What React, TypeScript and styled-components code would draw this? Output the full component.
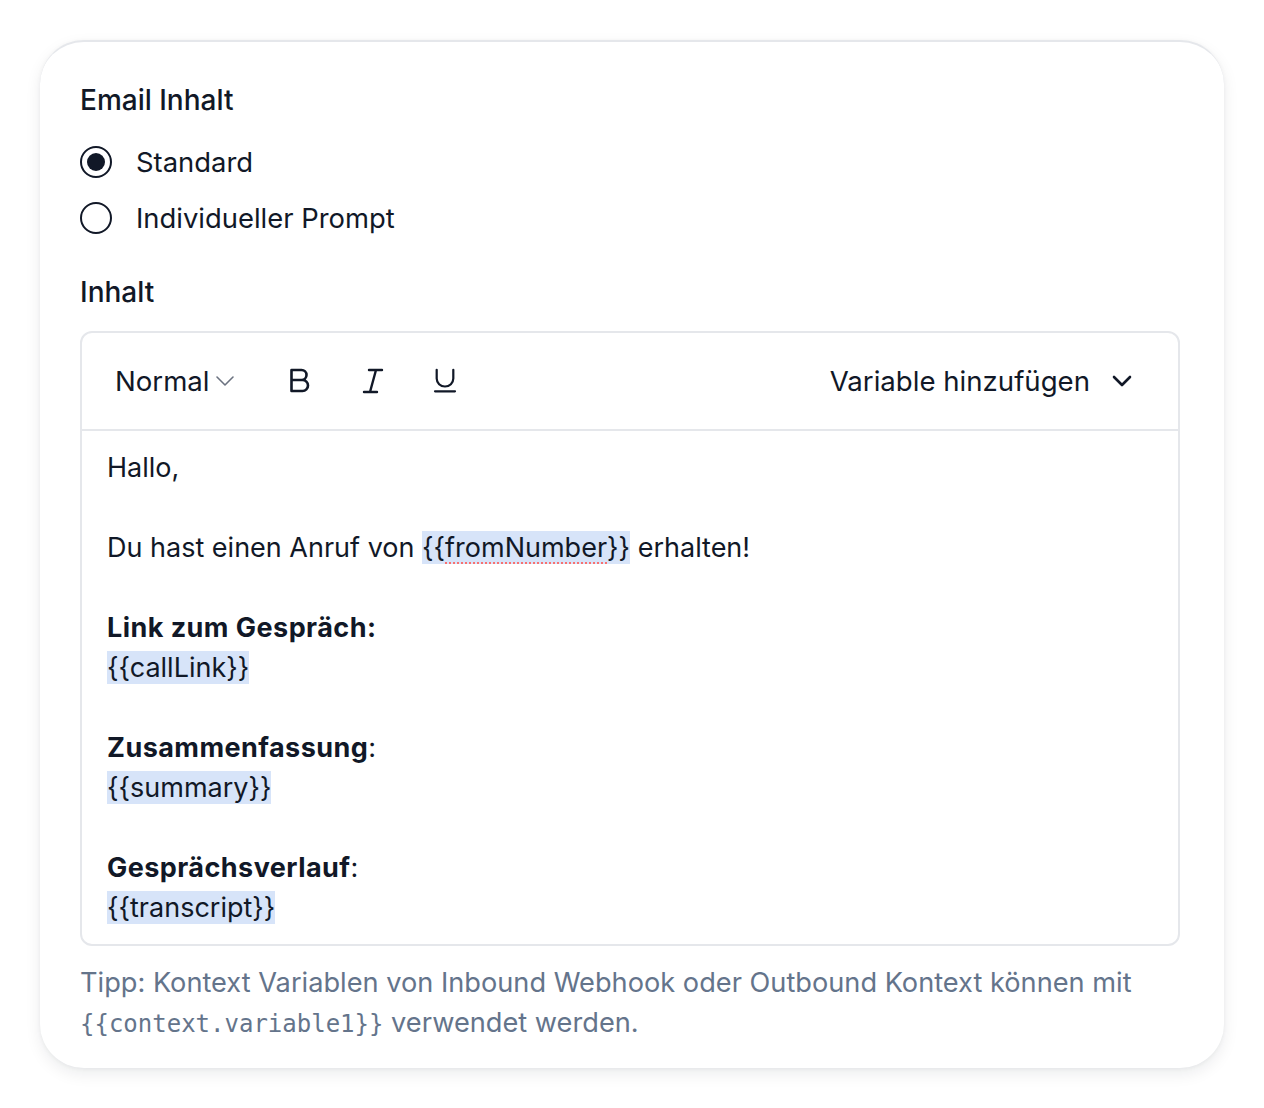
import React from "react";
import styled, { createGlobalStyle } from "styled-components";

const GlobalStyle = createGlobalStyle`
  html, body { margin: 0; padding: 0; background: #ffffff; }
  body { font-family: Inter, "Noto Sans", sans-serif; color: #111827; }
  * { box-sizing: border-box; }
`;

const Page = styled.div`
  padding: 40px;
`;

const Card = styled.section`
  width: 1184px;
  background: #ffffff;
  border-top: 2px solid #e5e7eb;
  border-radius: 44px;
  box-shadow: 0 6px 16px rgba(15, 23, 42, 0.08), 0 1px 4px rgba(15, 23, 42, 0.05);
  padding: 38px 44px 24px 40px;
  display: flex;
  flex-direction: column;
`;

const Label = styled.div`
  font-size: 28px;
  line-height: 40px;
  font-weight: 500;
  color: #111827;
`;

const RadioGroup = styled.div`
  display: flex;
  flex-direction: column;
  gap: 16px;
  margin: 22px 0 34px 0;
`;

const RadioRow = styled.label`
  display: flex;
  align-items: center;
  gap: 24px;
  height: 40px;
  font-size: 27.4px;
  color: #111827;
`;

const RadioCircle = styled.span<{ $checked?: boolean }>`
  width: 32px;
  height: 32px;
  border-radius: 50%;
  border: 2.5px solid #111827;
  display: flex;
  align-items: center;
  justify-content: center;
  flex-shrink: 0;
  &::after {
    content: "";
    display: ${(p) => (p.$checked ? "block" : "none")};
    width: 18px;
    height: 18px;
    border-radius: 50%;
    background: #111827;
  }
`;

const Editor = styled.div`
  margin-top: 19px;
  border: 2px solid #e5e7eb;
  border-radius: 12px;
  display: flex;
  flex-direction: column;
`;

const Toolbar = styled.div`
  height: 98px;
  border-bottom: 2px solid #e5e7eb;
  display: flex;
  align-items: center;
  padding: 0 46px 0 33px;
`;

const Picker = styled.div`
  display: flex;
  align-items: center;
  gap: 5px;
  font-size: 27.6px;
  color: #111827;
  margin-right: 54px;
`;

const IconButton = styled.button`
  border: none;
  background: none;
  padding: 0;
  width: 24px;
  height: 24px;
  margin-right: 48px;
  display: flex;
  align-items: center;
  justify-content: center;
  color: #111827;
`;

const Spacer = styled.div`
  flex: 1;
`;

const VariableSelect = styled.div`
  display: flex;
  align-items: center;
  gap: 22px;
  font-size: 27.6px;
  color: #111827;
`;

const Content = styled.div`
  padding: 17px 24px 16px 25px;
  font-size: 27px;
  line-height: 40px;
  color: #111827;
`;

const Para = styled.p`
  margin: 0;
  min-height: 40px;
`;

const Bold = styled.strong`
  font-weight: 700;
  letter-spacing: 0.45px;
`;

const Variable = styled.span`
  background: #d7e4f9;
`;

const Misspelled = styled.span`
  text-decoration: underline dotted #f87171;
  text-decoration-thickness: 2px;
  text-underline-offset: 5px;
`;

const Tip = styled.p`
  margin: 17px 0 0 0;
  font-size: 27.2px;
  line-height: 40px;
  color: #64748b;
`;

const Code = styled.code`
  font-family: "DejaVu Sans Mono", "Liberation Mono", monospace;
  font-size: 24px;
  color: #64748b;
`;

const SmallChevron = () => (
  <svg width="20" height="12" viewBox="0 0 20 12" fill="none">
    <path d="M2 2l8 8 8-8" stroke="#6b7280" strokeWidth="1.6" strokeLinecap="round" strokeLinejoin="round" />
  </svg>
);

const Chevron = () => (
  <svg width="20" height="12" viewBox="0 0 20 12" fill="none">
    <path d="M2 2l8 8 8-8" stroke="#111827" strokeWidth="2.6" strokeLinecap="round" strokeLinejoin="round" />
  </svg>
);

const BoldIcon = () => (
  <svg width="24" height="26" viewBox="0 0 24 26" fill="none">
    <path
      d="M2.5 2h10a5 5 0 0 1 0 10h-10z M2.5 12h11a5.5 5.5 0 0 1 0 11h-11z"
      stroke="#111827"
      strokeWidth="2.6"
      strokeLinejoin="round"
    />
  </svg>
);

const ItalicIcon = () => (
  <svg width="24" height="26" viewBox="0 0 24 26" fill="none">
    <path d="M8 2h13 M3 24h13 M15 2l-6 22" stroke="#111827" strokeWidth="2.4" strokeLinecap="round" />
  </svg>
);

const UnderlineIcon = () => (
  <svg width="26" height="28" viewBox="0 0 26 28" fill="none">
    <path d="M4 2v10a9 9 0 0 0 18 0V2" stroke="#111827" strokeWidth="2.4" strokeLinecap="round" transform="scale(1 0.95)" />
    <rect x="1" y="24" width="24" height="2.4" rx="1.2" fill="#111827" />
  </svg>
);

export default function App() {
  return (
    <Page>
      <GlobalStyle />
      <Card>
        <Label>Email Inhalt</Label>
        <RadioGroup>
          <RadioRow>
            <RadioCircle $checked />
            Standard
          </RadioRow>
          <RadioRow>
            <RadioCircle />
            Individueller Prompt
          </RadioRow>
        </RadioGroup>
        <Label>Inhalt</Label>
        <Editor>
          <Toolbar>
            <Picker>
              Normal
              <SmallChevron />
            </Picker>
            <IconButton aria-label="Bold">
              <BoldIcon />
            </IconButton>
            <IconButton aria-label="Italic">
              <ItalicIcon />
            </IconButton>
            <IconButton aria-label="Underline">
              <UnderlineIcon />
            </IconButton>
            <Spacer />
            <VariableSelect>
              Variable hinzufügen
              <Chevron />
            </VariableSelect>
          </Toolbar>
          <Content>
            <Para>Hallo,</Para>
            <Para />
            <Para>
              Du hast einen Anruf von{" "}
              <Variable>
                {"{{"}
                <Misspelled>fromNumber</Misspelled>
                {"}}"}
              </Variable>{" "}
              erhalten!
            </Para>
            <Para />
            <Para>
              <Bold>Link zum Gespräch:</Bold>
            </Para>
            <Para>
              <Variable>{"{{callLink}}"}</Variable>
            </Para>
            <Para />
            <Para>
              <Bold>Zusammenfassung</Bold>:
            </Para>
            <Para>
              <Variable>{"{{summary}}"}</Variable>
            </Para>
            <Para />
            <Para>
              <Bold>Gesprächsverlauf</Bold>:
            </Para>
            <Para>
              <Variable>{"{{transcript}}"}</Variable>
            </Para>
          </Content>
        </Editor>
        <Tip>
          Tipp: Kontext Variablen von Inbound Webhook oder Outbound Kontext können mit{" "}
          <Code>{"{{context.variable1}}"}</Code> verwendet werden.
        </Tip>
      </Card>
    </Page>
  );
}
